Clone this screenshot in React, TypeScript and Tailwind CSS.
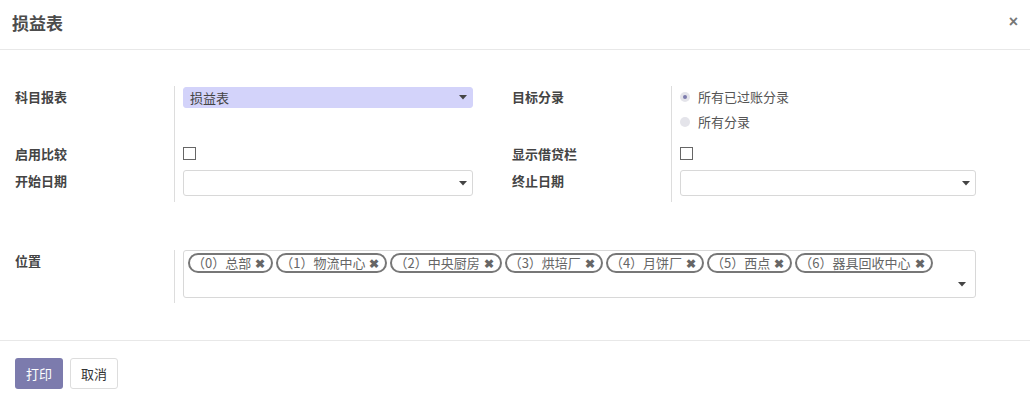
import React from "react";

const font = { fontFamily: '"Noto Sans CJK SC", "Noto Sans", sans-serif' };

function Caret() {
  return (
    <svg width="8" height="5" viewBox="0 0 8 5" className="shrink-0">
      <path d="M0 0 L8 0 L4 4.5 Z" fill="#444" />
    </svg>
  );
}

function Select({ value, highlight }: { value?: string; highlight?: boolean }) {
  return (
    <div
      className={
        "flex items-center justify-between pl-[6px] pr-[5px] rounded-[3px] border " +
        (highlight
          ? "h-[21px] bg-[#d3d3fa] border-[#d3d3fa] mt-[1px]"
          : "h-[26px] bg-white border-[#d8d8d8] mt-[4px]")
      }
    >
      <span className="text-[13px] text-[#444] leading-[20px]">{value}</span>
      <Caret />
    </div>
  );
}

function Check() {
  return <div className="w-[13px] h-[13px] border border-[#666] bg-white mt-[4px]" />;
}

const tags = [
  "（0）总部",
  "（1）物流中心",
  "（2）中央厨房",
  "（3）烘培厂",
  "（4）月饼厂",
  "（5）西点",
  "（6）器具回收中心",
];

function Label({ children, className = "" }: { children: React.ReactNode; className?: string }) {
  return (
    <div className={"text-[13px] font-bold text-[#444] leading-[20px] " + className}>
      {children}
    </div>
  );
}

export default function App() {
  return (
    <div className="w-[1030px] h-[411px] bg-white overflow-hidden" style={font}>
      <div className="h-[50px] border-b border-[#e8e8e8] flex items-center justify-between pl-[12px] pr-[12px]">
        <div className="text-[17px] font-bold text-[#4c4c4c] mb-[3px]">损益表</div>
        <div
          className="text-[16px] font-bold text-[#777] mb-[5px]"
          style={{ fontFamily: '"Liberation Sans", sans-serif' }}
        >
          ×
        </div>
      </div>

      <div className="pt-[36px] pl-[15px] flex">
        <div className="w-[482px] grid grid-cols-[159px_1fr]">
          <Label className="h-[57px] pt-[1px]">科目报表</Label>
          <div className="border-l border-[#ddd] pl-[8px] pr-[24px] h-[57px]">
            <Select value="损益表" highlight />
          </div>
          <Label className="h-[23px] pt-[1px]">启用比较</Label>
          <div className="border-l border-[#ddd] pl-[8px] h-[23px]">
            <Check />
          </div>
          <Label className="h-[36px] pt-[5px]">开始日期</Label>
          <div className="border-l border-[#ddd] pl-[8px] pr-[24px] h-[36px]">
            <Select />
          </div>
        </div>
        <div className="w-[497px] grid grid-cols-[159px_1fr] ml-[15px]">
          <Label className="h-[57px] pt-[1px]">目标分录</Label>
          <div className="border-l border-[#ddd] pl-[8px] h-[57px] flex flex-col">
            <div className="flex items-center h-[20px] mt-[1px] text-[13px] text-[#555]">
              <span className="w-[10px] h-[10px] rounded-full bg-[#e4e4ea] flex items-center justify-center mr-[8px]">
                <span className="w-[4px] h-[4px] rounded-full bg-[#7c7bad]" />
              </span>
              所有已过账分录
            </div>
            <div className="flex items-center h-[20px] mt-[5px] text-[13px] text-[#555]">
              <span className="w-[10px] h-[10px] rounded-full bg-[#e4e4ea] mr-[8px]" />
              所有分录
            </div>
          </div>
          <Label className="h-[23px] pt-[1px]">显示借贷栏</Label>
          <div className="border-l border-[#ddd] pl-[8px] h-[23px]">
            <Check />
          </div>
          <Label className="h-[36px] pt-[5px]">终止日期</Label>
          <div className="border-l border-[#ddd] pl-[8px] pr-[33px] h-[36px]">
            <Select />
          </div>
        </div>
      </div>

      <div className="mt-[48px] pl-[15px] grid grid-cols-[159px_1fr] w-[1000px]">
        <Label className="pt-[1px]">位置</Label>
        <div className="border-l border-[#ddd] pl-[8px] h-[53px] pr-[24px]">
          <div className="h-[48px] border border-[#d8d8d8] rounded-[3px] relative pl-[4px] pt-[2px]">
            <div className="flex gap-[3px]">
              {tags.map((t) => (
                <div
                  key={t}
                  className="flex items-center h-[20px] border-2 border-[#777] rounded-full pl-[2px] pr-[6px] text-[13px] text-[#666] leading-[16px]"
                >
                  <span>{t}</span>
                  <span className="ml-[4px] text-[12px] font-bold text-[#666]">✖</span>
                </div>
              ))}
            </div>
            <div className="absolute right-[9px] bottom-[10px]">
              <Caret />
            </div>
          </div>
        </div>
      </div>

      <div className="mt-[37px] border-t border-[#e8e8e8] pt-[17px] pl-[15px] flex gap-[7px]">
        <button className="w-[48px] h-[31px] rounded-[3px] bg-[#7c7bad] text-white text-[13px]">
          打印
        </button>
        <button className="w-[48px] h-[31px] rounded-[3px] bg-white border border-[#ddd] text-[#333] text-[13px]">
          取消
        </button>
      </div>
    </div>
  );
}
